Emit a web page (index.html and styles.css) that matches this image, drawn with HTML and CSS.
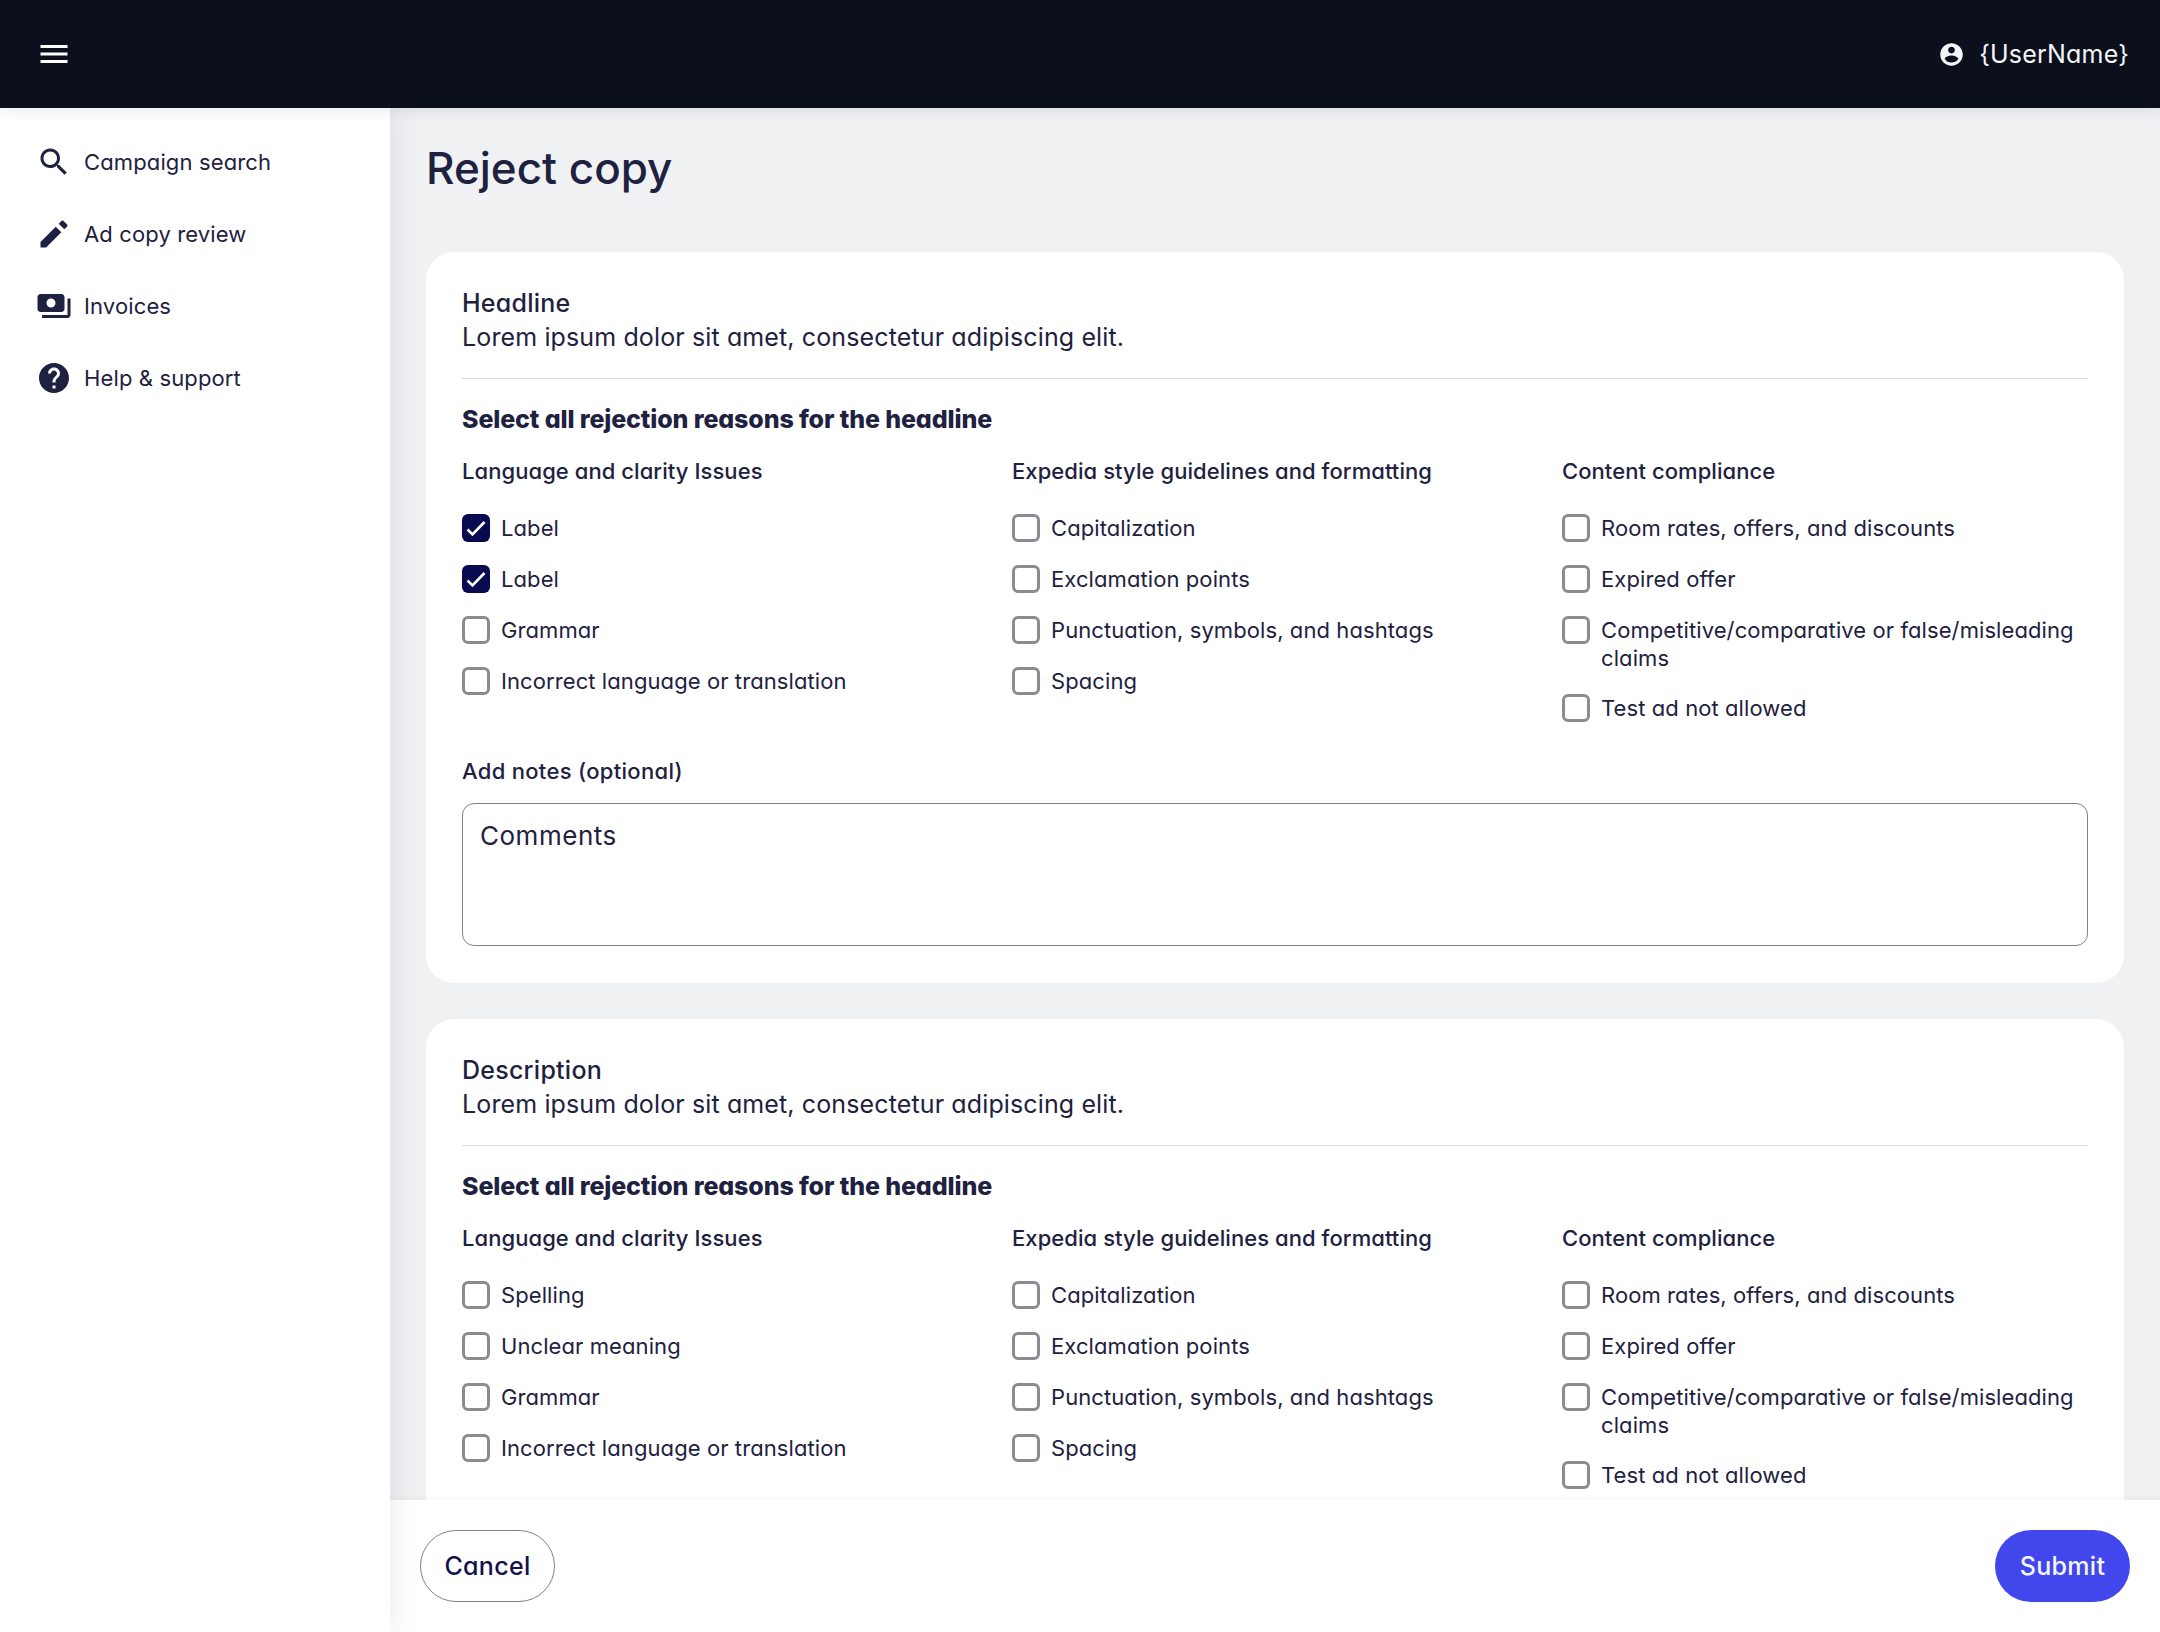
FILE: index.html
```html
<!DOCTYPE html>
<html lang="en">
<head>
<meta charset="utf-8">
<title>Reject copy</title>
<link rel="stylesheet" href="styles.css">
</head>
<body>
<div class="app">
  <header class="topbar">
    <button class="menu-btn" aria-label="Menu">
      <svg class="icon-menu" viewBox="0 0 24 24"><path d="M3 18h18v-2H3v2zm0-5h18v-2H3v2zm0-7v2h18V6H3z"/></svg>
    </button>
    <div class="user">
      <svg class="icon-user" viewBox="0 0 24 24"><path d="M12 2C6.48 2 2 6.48 2 12s4.48 10 10 10 10-4.48 10-10S17.52 2 12 2zm0 3c1.66 0 3 1.34 3 3s-1.34 3-3 3-3-1.34-3-3 1.34-3 3-3zm0 14.2c-2.5 0-4.71-1.28-6-3.22.03-1.99 4-3.08 6-3.08 1.99 0 5.97 1.09 6 3.08-1.29 1.94-3.5 3.22-6 3.22z"/></svg>
      <span class="user-name">{UserName}</span>
    </div>
  </header>
  <div class="body-row">
    <nav class="sidebar">
      <a class="nav-item"><svg class="nav-icon" viewBox="0 0 24 24"><path d="M15.5 14h-.79l-.28-.27C15.41 12.59 16 11.11 16 9.5 16 5.91 13.09 3 9.5 3S3 5.91 3 9.5 5.91 16 9.5 16c1.61 0 3.09-.59 4.23-1.57l.27.28v.79l5 4.99L20.49 19l-4.99-5zm-6 0C7.01 14 5 11.99 5 9.5S7.01 5 9.5 5 14 7.01 14 9.5 11.99 14 9.5 14z"/></svg><span>Campaign search</span></a>
      <a class="nav-item"><svg class="nav-icon" viewBox="0 0 24 24"><path d="M3 17.25V21h3.75L16.9 10.85l-3.75-3.75L3 17.25zM20.71 7.04c.39-.39.39-1.02 0-1.41l-2.34-2.34c-.39-.39-1.02-.39-1.41 0l-1.83 1.83 3.75 3.75 1.83-1.83z"/></svg><span>Ad copy review</span></a>
      <a class="nav-item"><svg class="nav-icon" viewBox="0 0 24 24"><path d="M19 14V6c0-1.1-.9-2-2-2H3c-1.1 0-2 .9-2 2v8c0 1.1.9 2 2 2h14c1.1 0 2-.9 2-2zm-9-1c-1.66 0-3-1.34-3-3s1.34-3 3-3 3 1.34 3 3-1.34 3-3 3zm13-6v11c0 1.1-.9 2-2 2H4v-2h17V7h2z"/></svg><span>Invoices</span></a>
      <a class="nav-item"><svg class="nav-icon" viewBox="0 0 24 24"><path d="M12 2C6.48 2 2 6.48 2 12s4.48 10 10 10 10-4.48 10-10S17.52 2 12 2zm1 17h-2v-2h2v2zm2.07-7.75l-.9.92C13.45 12.9 13 13.5 13 15h-2v-.5c0-1.1.45-2.1 1.17-2.83l1.24-1.26c.37-.36.59-.86.59-1.41 0-1.1-.9-2-2-2s-2 .9-2 2H8c0-2.21 1.79-4 4-4s4 1.79 4 4c0 .88-.36 1.68-.93 2.25z"/></svg><span>Help &amp; support</span></a>
    </nav>
    <div class="content">
      <main class="scroll">
        <h1 class="page-title">Reject copy</h1>

        <section class="card">
          <h2 class="card-title">Headline</h2>
          <p class="card-text">Lorem ipsum dolor sit amet, consectetur adipiscing elit.</p>
          <hr class="divider">
          <h3 class="reasons-title">Select all rejection reasons for the headline</h3>
          <div class="columns">
            <div class="column">
              <h4 class="column-title">Language and clarity Issues</h4>
              <label class="check"><span class="box checked"><svg viewBox="0 0 28 28"><path d="M5.5 15.5l5 5 12-12.5" /></svg></span><span class="check-label">Label</span></label>
              <label class="check"><span class="box checked"><svg viewBox="0 0 28 28"><path d="M5.5 15.5l5 5 12-12.5" /></svg></span><span class="check-label">Label</span></label>
              <label class="check"><span class="box"></span><span class="check-label">Grammar</span></label>
              <label class="check"><span class="box"></span><span class="check-label">Incorrect language or translation</span></label>
            </div>
            <div class="column">
              <h4 class="column-title">Expedia style guidelines and formatting</h4>
              <label class="check"><span class="box"></span><span class="check-label">Capitalization</span></label>
              <label class="check"><span class="box"></span><span class="check-label">Exclamation points</span></label>
              <label class="check"><span class="box"></span><span class="check-label">Punctuation, symbols, and hashtags</span></label>
              <label class="check"><span class="box"></span><span class="check-label">Spacing</span></label>
            </div>
            <div class="column">
              <h4 class="column-title">Content compliance</h4>
              <label class="check"><span class="box"></span><span class="check-label">Room rates, offers, and discounts</span></label>
              <label class="check"><span class="box"></span><span class="check-label">Expired offer</span></label>
              <label class="check"><span class="box"></span><span class="check-label">Competitive/comparative or false/misleading claims</span></label>
              <label class="check"><span class="box"></span><span class="check-label">Test ad not allowed</span></label>
            </div>
          </div>
          <h4 class="notes-title">Add notes (optional)</h4>
          <div class="notes">Comments</div>
        </section>

        <section class="card">
          <h2 class="card-title">Description</h2>
          <p class="card-text">Lorem ipsum dolor sit amet, consectetur adipiscing elit.</p>
          <hr class="divider">
          <h3 class="reasons-title">Select all rejection reasons for the headline</h3>
          <div class="columns">
            <div class="column">
              <h4 class="column-title">Language and clarity Issues</h4>
              <label class="check"><span class="box"></span><span class="check-label">Spelling</span></label>
              <label class="check"><span class="box"></span><span class="check-label">Unclear meaning</span></label>
              <label class="check"><span class="box"></span><span class="check-label">Grammar</span></label>
              <label class="check"><span class="box"></span><span class="check-label">Incorrect language or translation</span></label>
            </div>
            <div class="column">
              <h4 class="column-title">Expedia style guidelines and formatting</h4>
              <label class="check"><span class="box"></span><span class="check-label">Capitalization</span></label>
              <label class="check"><span class="box"></span><span class="check-label">Exclamation points</span></label>
              <label class="check"><span class="box"></span><span class="check-label">Punctuation, symbols, and hashtags</span></label>
              <label class="check"><span class="box"></span><span class="check-label">Spacing</span></label>
            </div>
            <div class="column">
              <h4 class="column-title">Content compliance</h4>
              <label class="check"><span class="box"></span><span class="check-label">Room rates, offers, and discounts</span></label>
              <label class="check"><span class="box"></span><span class="check-label">Expired offer</span></label>
              <label class="check"><span class="box"></span><span class="check-label">Competitive/comparative or false/misleading claims</span></label>
              <label class="check"><span class="box"></span><span class="check-label">Test ad not allowed</span></label>
            </div>
          </div>
        </section>
      </main>
      <footer class="footer">
        <button class="btn btn-cancel">Cancel</button>
        <button class="btn btn-submit">Submit</button>
      </footer>
    </div>
  </div>
</div>
</body>
</html>
```

FILE: styles.css
```css
* { box-sizing: border-box; }
html, body { margin: 0; padding: 0; }
body {
  width: 2160px;
  height: 1632px;
  overflow: hidden;
  font-family: "Inter", "Noto Sans", sans-serif;
  font-feature-settings: "cv11";
  color: #1e2140;
  background: #eff1f3;
}
.app { display: flex; flex-direction: column; height: 100%; }

.topbar {
  flex: 0 0 108px;
  display: flex;
  align-items: center;
  justify-content: space-between;
  padding: 0 31px 0 36px;
  background: #0c0f1c;
  box-shadow: 0 2px 14px rgba(30, 40, 60, 0.1);
  position: relative;
  z-index: 3;
}
.menu-btn { display: flex; padding: 0; border: 0; background: none; }
.icon-menu { width: 36px; height: 36px; fill: #fff; }
.user { display: flex; align-items: center; gap: 14px; color: #f4f5f8; }
.icon-user { width: 27px; height: 27px; fill: #f4f5f8; }
.user-name { font-size: 25px; letter-spacing: 0.008em; line-height: 34px; }

.body-row { flex: 1; display: flex; min-height: 0; }
.sidebar {
  flex: 0 0 390px;
  background: #fff;
  padding-top: 18px;
  display: flex;
  flex-direction: column;
  box-shadow: 0 2px 30px rgba(30, 40, 60, 0.1);
  position: relative;
  z-index: 2;
}
.nav-item {
  height: 72px;
  display: flex;
  align-items: center;
  gap: 12px;
  padding-left: 36px;
  font-size: 22px;
  letter-spacing: 0.006em;
}
.nav-icon { width: 36px; height: 36px; fill: #1e2140; flex: none; }

.content { flex: 1; display: flex; flex-direction: column; min-width: 0; }
.scroll { flex: 1; min-height: 0; overflow: hidden; padding: 30px 36px 0; }
.page-title {
  margin: 0 0 54px;
  font-size: 44px;
  line-height: 60px;
  font-weight: 500;
  letter-spacing: 0;
}
.card {
  background: #fff;
  border-radius: 28px;
  padding: 34px 36px 37px;
  margin-bottom: 36px;
}
.card-title {
  margin: 0;
  font-size: 25px;
  line-height: 34px;
  font-weight: 500;
  letter-spacing: 0.01em;
}
.card-text {
  margin: 0;
  font-size: 25px;
  line-height: 34px;
  letter-spacing: 0.005em;
}
.divider { margin: 24px 0 23px; border: 0; height: 1px; background: #d8dadd; }
.reasons-title {
  margin: 0 0 20px;
  font-size: 25px;
  line-height: 34px;
  font-weight: 800;
  letter-spacing: -0.005em;
}
.columns { display: grid; grid-template-columns: repeat(3, 1fr); gap: 24px; }
.column { display: flex; flex-direction: column; gap: 23px; }
.column-title {
  margin: 0 0 5px;
  font-size: 22px;
  line-height: 30px;
  font-weight: 500;
  letter-spacing: 0.003em;
}
.check { display: flex; align-items: flex-start; gap: 11px; min-height: 28px; }
.box {
  flex: none;
  width: 28px;
  height: 28px;
  border: 3px solid #8b8c93;
  border-radius: 6px;
  background: #fff;
}
.box.checked { background: #0a0a50; border: 0; }
.box svg { display: block; width: 28px; height: 28px; fill: none; stroke: #fff; stroke-width: 2.6; }
.check-label { margin: 1px 0 -1px; font-size: 22px; line-height: 27.5px; letter-spacing: 0.004em; }
.notes-title {
  margin: 34px 0 17px;
  font-size: 22px;
  line-height: 30px;
  font-weight: 500;
  letter-spacing: 0.014em;
}
.notes {
  height: 143px;
  border: 1.5px solid #808288;
  border-radius: 12px;
  padding: 15px 17px;
  font-size: 26px;
  line-height: 34px;
  letter-spacing: 0.02em;
}

.footer {
  flex: 0 0 132px;
  display: flex;
  align-items: center;
  justify-content: space-between;
  padding: 0 30px;
  background: #fff;
  box-shadow: 0 -1px 6px rgba(30, 40, 60, 0.05);
  position: relative;
  z-index: 1;
}
.btn {
  width: 135px;
  height: 72px;
  border-radius: 36px;
  font-family: inherit;
  font-feature-settings: inherit;
  font-size: 25px;
  font-weight: 500;
  letter-spacing: 0.012em;
}
.btn-cancel { background: #fff; border: 1.5px solid #808288; color: #10104e; }
.btn-submit { background: #4147ec; border: 0; color: #f4f5ff; }
```
